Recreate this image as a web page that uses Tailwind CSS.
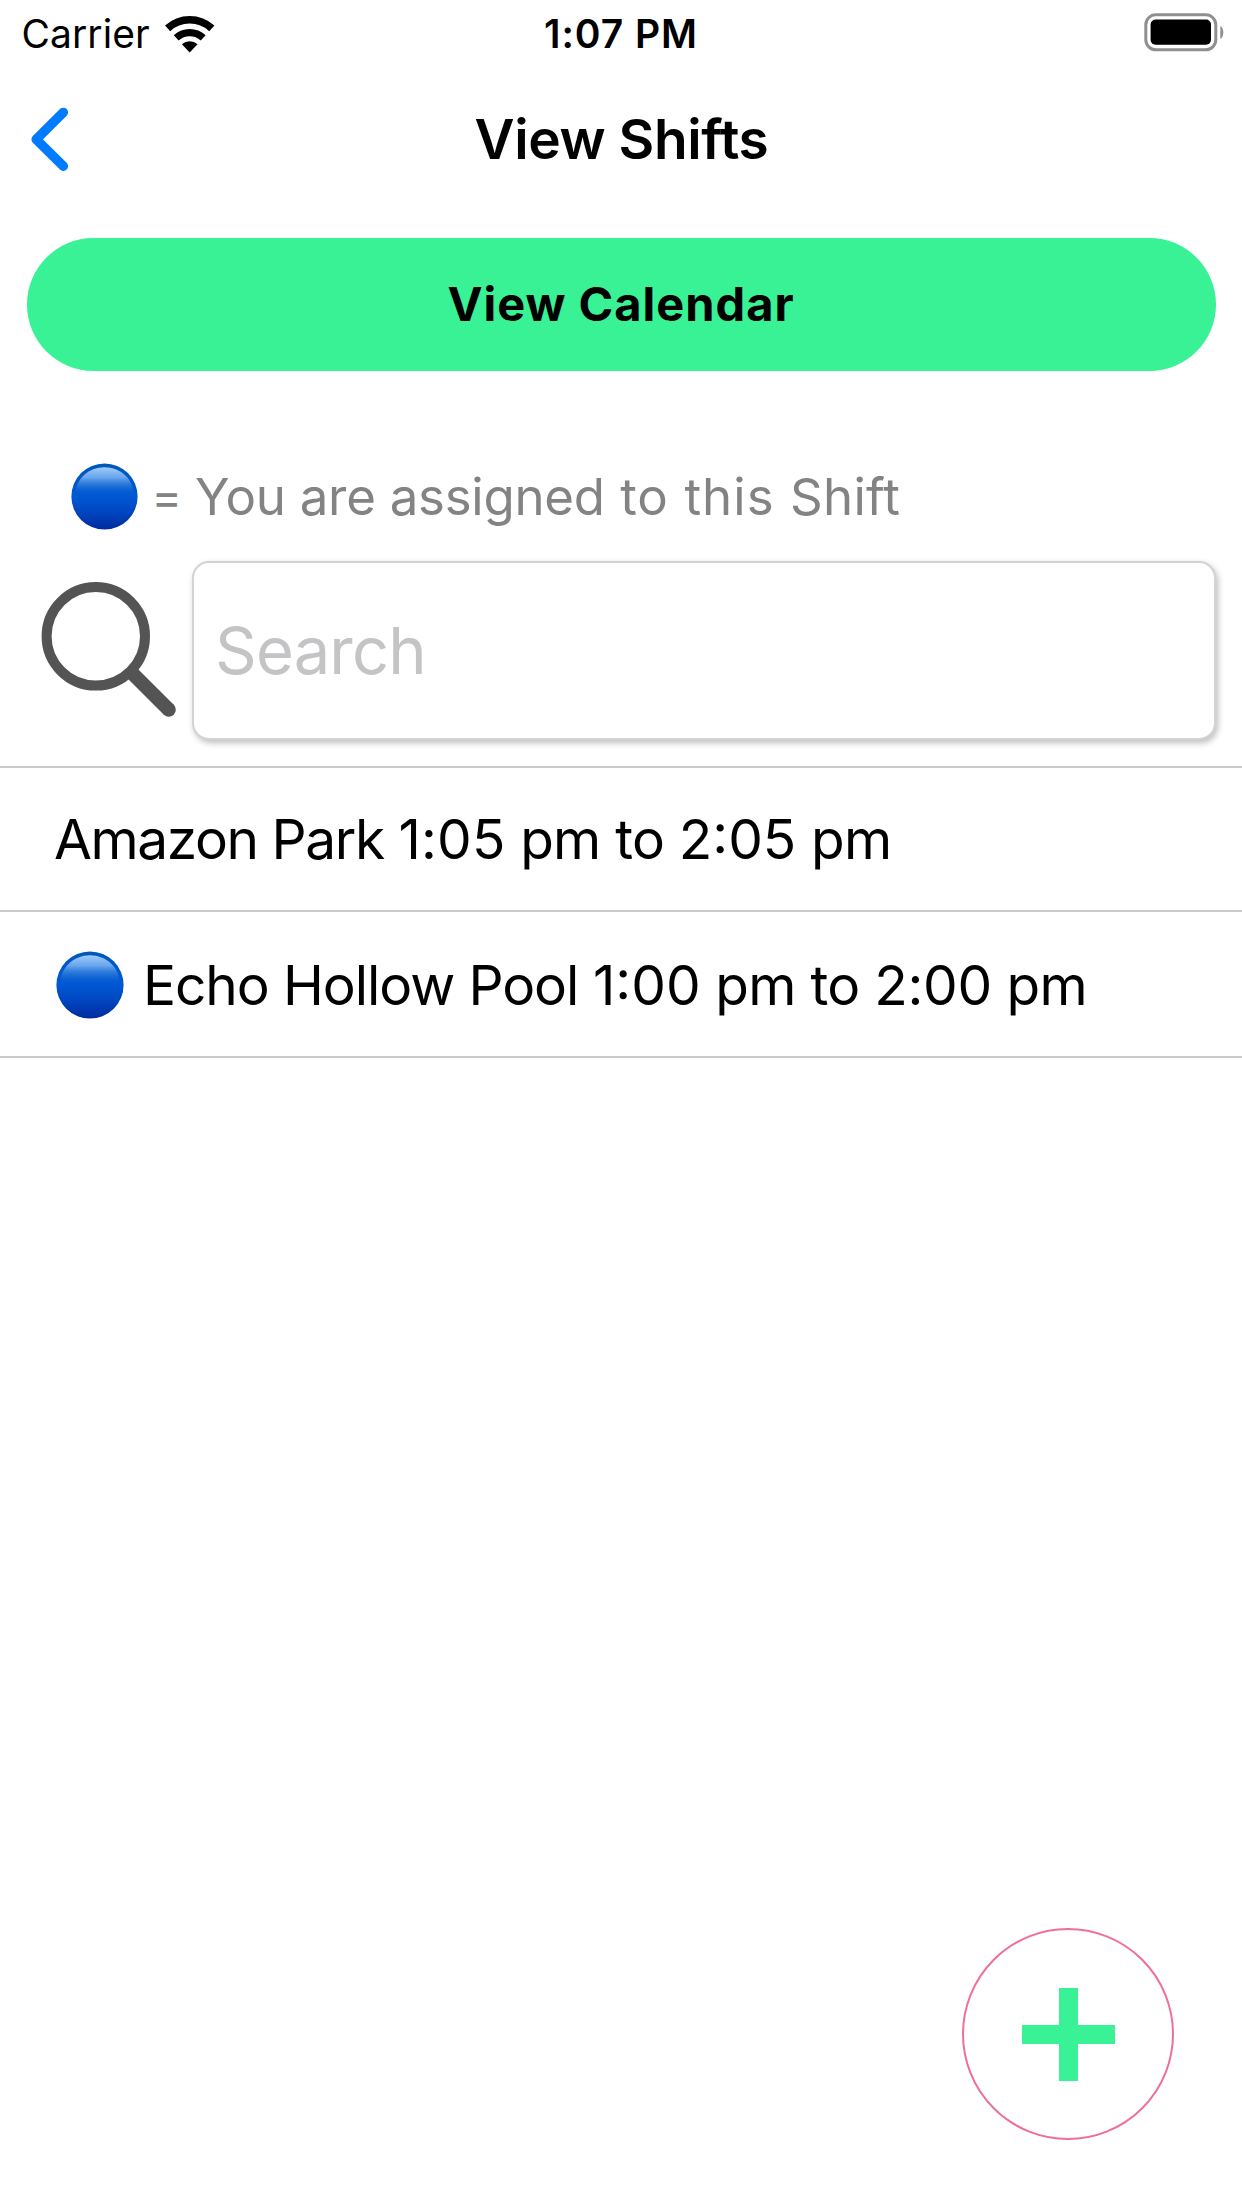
<!DOCTYPE html>
<html lang="en">
<head>
<meta charset="utf-8">
<title>View Shifts</title>
<script src="https://cdn.jsdelivr.net/npm/@tailwindcss/browser@4"></script>
</head>
<body class="bg-white">
<div class="relative flex h-[2208px] w-[1242px] flex-col overflow-hidden bg-white font-['Inter',sans-serif] text-black">

  <!-- Status bar -->
  <div class="grid h-[68px] shrink-0 grid-cols-3 items-center">
    <div class="flex items-center pl-[21.5px]">
      <span class="w-[143.5px] text-[39px] leading-[68px] tracking-[0.06px]">Carrier</span>
      <svg class="h-[37px] w-[50px]" viewBox="0 0 50 37" fill="none" stroke="#000">
        <path d="M2.6 12.4A32.7 32.7 0 0 1 46.8 12.4" stroke-width="7.6"/>
        <path d="M11.2 21.8A20 20 0 0 1 38.2 21.8" stroke-width="7.2"/>
        <path d="M24.7 36.5L16.9 28.2A11.5 11.5 0 0 1 32.5 28.2Z" fill="#000" stroke="none"/>
      </svg>
    </div>
    <div class="text-center text-[39px] leading-[68px] font-semibold tracking-[0.94px]">1:07 PM</div>
    <div class="flex justify-end pr-[18px] pb-1">
      <svg class="h-10 w-20" viewBox="0 0 80 40">
        <rect x="1.8" y="2.8" width="70" height="35" rx="10" fill="none" stroke="#8f8f8f" stroke-width="3"/>
        <rect x="6.6" y="7.6" width="60.4" height="25.2" rx="5" fill="#000"/>
        <path d="M76.3 14C80.3 16 80.3 25 76.3 27Z" fill="#8f8f8f"/>
      </svg>
    </div>
  </div>

  <!-- Navigation bar -->
  <div class="grid h-[142px] shrink-0 grid-cols-[200px_1fr_200px] items-center">
    <svg class="ml-[31px] h-16 w-[38px]" viewBox="0 0 38 64" fill="none" stroke="#007aff" stroke-width="9.5" stroke-linecap="round" stroke-linejoin="round">
      <path d="M32.3 5.4L5.2 32.4L32.3 59.2"/>
    </svg>
    <h1 class="pl-px text-center text-[55px] font-semibold tracking-[-0.42px]">View Shifts</h1>
  </div>

  <button class="mx-[26.5px] mt-[28.3px] h-[132.4px] shrink-0 rounded-full bg-[#38f295] pb-[1px] text-center text-[47px] font-bold tracking-[0.98px]">View Calendar</button>

  <!-- Legend -->
  <div class="mt-[92px] flex h-[67px] shrink-0 items-center pl-[71px] text-[51px] text-[#838383]">
    <svg class="size-[67px]" viewBox="0 0 68 68">
      <defs>
        <linearGradient id="ball" x1="0" y1="0" x2="0" y2="1"><stop offset="0" stop-color="#0058b8"/><stop offset=".5" stop-color="#0058d4"/><stop offset=".75" stop-color="#0044bf"/><stop offset="1" stop-color="#002a9e"/></linearGradient>
        <linearGradient id="gloss" x1="0" y1="0" x2="0" y2="1"><stop offset="0" stop-color="#a0ccff"/><stop offset=".35" stop-color="#84baf6" stop-opacity=".8"/><stop offset="1" stop-color="#0058d4" stop-opacity="0"/></linearGradient>
      </defs>
      <circle cx="34" cy="34" r="33.6" fill="url(#ball)"/>
      <path d="M4 34C4 16 18 4.2 34 4.2S64 16 64 34Z" fill="url(#gloss)"/>
    </svg>
    <span class="ml-[13.5px] w-[43.5px] text-[46px]">=</span>
    <span class="pt-0.5 tracking-[0.2px] whitespace-pre"><span class="tracking-[-0.27px]">You are assigned</span><span class="tracking-[1.05px]"> to this </span>Shift</span>
  </div>

  <!-- Search -->
  <div class="mt-[31px] flex h-[178px] shrink-0 items-start pl-[41px]">
    <svg class="mt-[21.5px] h-[136px] w-[136px]" viewBox="0 0 136 136" fill="none" stroke="#545454">
      <circle cx="54.8" cy="54.3" r="49.2" stroke-width="10"/>
      <path d="M90 90L127.8 127.7" stroke-width="14"/>
      <circle cx="127.8" cy="127.7" r="7" fill="#545454" stroke="none"/>
    </svg>
    <div class="ml-[15px] flex h-[179px] w-[1024px] items-center rounded-[17px] border-2 border-[#d3d3d3] bg-white pt-0.5 pl-[21px] text-[65px] tracking-[-0.8px] text-[#c4c4c6] shadow-[2px_3px_6px_rgba(0,0,0,0.26)]">Search</div>
  </div>

  <!-- Shifts -->
  <div class="mt-[27px] shrink-0 border-t-2 border-[#cbcbcb]">
    <div class="flex h-[144px] items-center border-b-2 border-[#cbcbcb] pt-0.5 pl-[54px] text-[55px]">
      <span class="tracking-[-0.78px] whitespace-pre"><span class="tracking-[-1.42px]">Amazon Park</span> <span class="tracking-[0.2px]">1:05</span> pm to <span class="tracking-[0px]">2:05</span> pm</span>
    </div>
    <div class="flex h-[146px] items-center border-b-2 border-[#cbcbcb] pt-[3px] pl-14 text-[55px]">
      <svg class="mr-[19px] size-[68px]" viewBox="0 0 68 68">
        <circle cx="34" cy="34" r="33.6" fill="url(#ball)"/>
        <path d="M4 34C4 16 18 4.2 34 4.2S64 16 64 34Z" fill="url(#gloss)"/>
      </svg>
      <span class="tracking-[-0.73px] whitespace-pre"><span class="tracking-[-1.08px]">Echo Hollow Pool</span> <span class="tracking-[0px]">1:00</span> pm to <span class="tracking-[-0.3px]">2:00</span> pm</span>
    </div>
  </div>

  <!-- Floating add button -->
  <button aria-label="Add shift" class="absolute right-[68px] bottom-[68px] flex size-[212px] items-center justify-center rounded-full border-2 border-[#ee6f9f] bg-white">
    <svg class="size-[93px]" viewBox="0 0 93 93" fill="#38f295"><path d="M37 0H56V37H93V56H56V93H37V56H0V37H37Z"/></svg>
  </button>
</div>
</body>
</html>
